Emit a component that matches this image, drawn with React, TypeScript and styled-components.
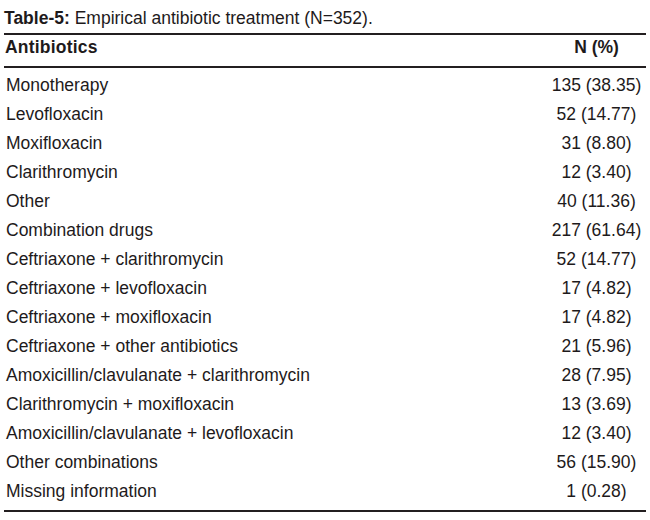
import React from 'react';
import styled, {createGlobalStyle} from "styled-components";

const rows: [string, string][] = [
    ['Monotherapy', '135 (38.35)'],
    ['Levofloxacin', '52 (14.77)'],
    ['Moxifloxacin', '31 (8.80)'],
    ['Clarithromycin', '12 (3.40)'],
    ['Other', '40 (11.36)'],
    ['Combination drugs', '217 (61.64)'],
    ['Ceftriaxone + clarithromycin', '52 (14.77)'],
    ['Ceftriaxone + levofloxacin', '17 (4.82)'],
    ['Ceftriaxone + moxifloxacin', '17 (4.82)'],
    ['Ceftriaxone + other antibiotics', '21 (5.96)'],
    ['Amoxicillin/clavulanate + clarithromycin', '28 (7.95)'],
    ['Clarithromycin + moxifloxacin', '13 (3.69)'],
    ['Amoxicillin/clavulanate + levofloxacin', '12 (3.40)'],
    ['Other combinations', '56 (15.90)'],
    ['Missing information', '1 (0.28)'],
];

const App = () => {
    return (
        <>
            <GlobalStyle/>
            <Page>
                <Caption>
                    <b>Table-5:</b> Empirical antibiotic treatment (N=352).
                </Caption>
                <Table>
                    <HeadCell>Antibiotics</HeadCell>
                    <HeadCell center>N (%)</HeadCell>
                    <Body>
                        {
                            rows.map(([name, value], index) => (
                                <React.Fragment key={name + index}>
                                    <Cell>{name}</Cell>
                                    <Cell center>{value}</Cell>
                                </React.Fragment>
                            ))
                        }
                    </Body>
                </Table>
            </Page>
        </>
    );
};

const GlobalStyle = createGlobalStyle`
body {
    margin: 0;
    background: #ffffff;
    font-family: "Liberation Sans", Arial, sans-serif;
    color: #1e1a1b;
}
`;

const Page = styled.div`
width: 650px;
height: 520px;
padding: 0 4px;
box-sizing: border-box;
background: #ffffff;
`;

const Caption = styled.div`
padding-top: 4px;
font-size: 17.5px;
line-height: 29px;
white-space: nowrap;

b {
    font-weight: 700;
}
`;

const Table = styled.div`
display: grid;
grid-template-columns: 1fr 99px;
border-top: 2px solid #231f20;
border-bottom: 2px solid #231f20;
font-size: 17.5px;
`;

const HeadCell = styled.div<{center?: boolean}>`
font-weight: 700;
line-height: 24px;
padding: 0 0 7px ${p => p.center ? '0' : '1px'};
text-align: ${p => p.center ? 'center' : 'left'};
border-bottom: 2px solid #231f20;
letter-spacing: ${p => p.center ? '0' : '0.2px'};
`;

const Body = styled.div`
grid-column: 1 / -1;
display: grid;
grid-template-columns: 1fr 99px;
padding: 3px 0 4px;
`;

const Cell = styled.div<{center?: boolean}>`
line-height: 29px;
padding-left: ${p => p.center ? '0' : '2px'};
text-align: ${p => p.center ? 'center' : 'left'};
white-space: nowrap;
`;

export default App;
